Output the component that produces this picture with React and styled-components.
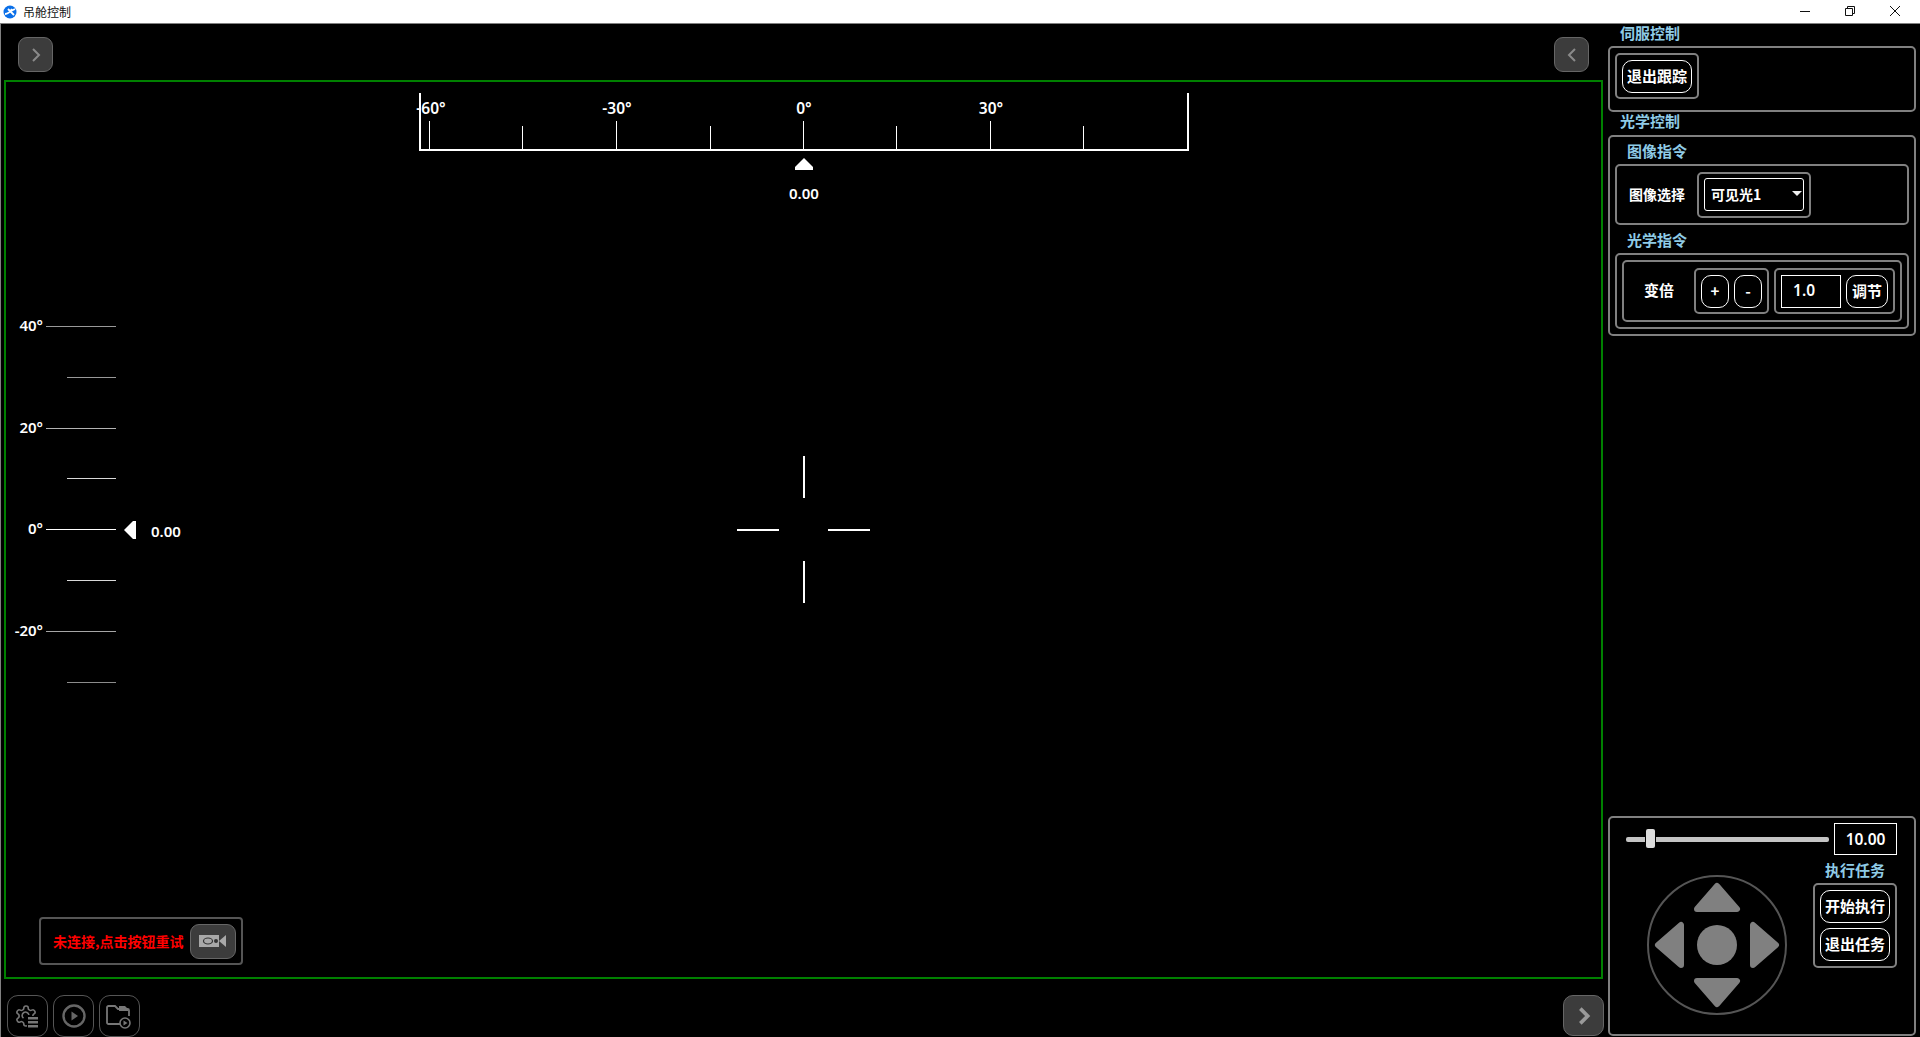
import React from "react";
import styled, { createGlobalStyle } from "styled-components";

const FONT = `"Noto Sans", "Noto Sans CJK SC", sans-serif`;
const LABEL_BLUE = "#8fcbe6";

const Global = createGlobalStyle`
  html, body { margin: 0; padding: 0; background: #000; overflow: hidden; }
  * { box-sizing: border-box; }
  #root { width: 1920px; height: 1037px; font-family: ${FONT}; }
`;

const Page = styled.div`
  width: 1920px;
  height: 1037px;
  display: flex;
  flex-direction: column;
  background: #000;
  color: #fff;
`;

const TitleBar = styled.div`
  height: 24px;
  flex: none;
  background: #fff;
  border-bottom: 1px solid #808080;
  display: flex;
  align-items: center;
  padding-left: 3px;
`;
const TitleText = styled.span`
  margin-left: 6px;
  font: 400 12px/1 "Noto Sans CJK SC", sans-serif;
  color: #111;
`;
const WinControls = styled.div`
  margin-left: auto;
  display: flex;
  align-items: center;
  height: 100%;
  padding: 0 19px 2px 0;
  gap: 33px;
`;

const Body = styled.div`
  flex: 1;
  display: flex;
  min-height: 0;
  border-left: 1px solid #808080;
`;

const LeftColumn = styled.div`
  width: 1607px;
  flex: none;
  display: flex;
  flex-direction: column;
`;
const TopBar = styled.div`
  height: 56px;
  flex: none;
  padding: 13px 15px 0 17px;
  display: flex;
  justify-content: space-between;
  align-items: flex-start;
  width: 1603px;
`;
const NavButton = styled.button`
  width: ${(p) => p.$size}px;
  height: ${(p) => p.$size}px;
  padding: 0;
  background: #3c3c3c;
  border: 1px solid #666;
  border-radius: ${(p) => (p.$size > 36 ? 10 : 9)}px;
  display: flex;
  align-items: center;
  justify-content: center;
`;
const VideoFrame = styled.div`
  position: relative;
  margin-left: 3px;
  width: 1599px;
  height: 899px;
  flex: none;
  border: 2px solid #008000;
`;
const BottomBar = styled.div`
  flex: 1;
  display: flex;
  align-items: flex-start;
  padding: 16px 0 0 6px;
  gap: 5px;
`;
const ToolButton = styled.button`
  width: 41px;
  height: 42px;
  padding: 0 ${(p) => p.$nudge || 0}px 0 0;
  background: #000;
  border: 1px solid #555;
  border-radius: 11px;
  display: flex;
  align-items: center;
  justify-content: center;
`;
const NextButton = styled(NavButton)`
  margin-left: auto;
  margin-right: 4px;
`;

/* HUD overlays on the video frame */
const HRuler = styled.div`
  position: absolute;
  left: 413px;
  top: 11px;
  width: 770px;
  height: 58px;
  border-left: 2px solid #fff;
  border-right: 2px solid #fff;
  border-bottom: 2px solid #fff;
`;
const HTick = styled.i`
  position: absolute;
  bottom: 0;
  width: 1px;
  background: #fff;
  height: ${(p) => (p.$long ? 28 : 23)}px;
`;
const HLabel = styled.span`
  position: absolute;
  top: 5px;
  transform: translateX(-50%);
  font: 600 15.500px/20px ${FONT};
  white-space: nowrap;
`;
const HPointer = styled.svg`
  position: absolute;
  left: 789px;
  top: 76px;
`;
const HudValue = styled.span`
  position: absolute;
  font: 600 15px/20px ${FONT};
`;
const VScale = styled.div`
  position: absolute;
  left: 0;
  top: 244px;
  width: 110px;
`;
const VRow = styled.div`
  height: 50.800px;
  position: relative;
`;
const VLine = styled.i`
  position: absolute;
  top: 0;
  right: 0;
  height: 1px;
  width: ${(p) => (p.$long ? 70 : 49)}px;
  background: rgba(255, 255, 255, ${(p) => p.$alpha});
`;
const VLabel = styled.span`
  position: absolute;
  right: 73px;
  top: -11px;
  font: 600 15px/20px ${FONT};
  white-space: nowrap;
`;
const VPointer = styled.svg`
  position: absolute;
  left: 118px;
  top: 439px;
`;
const CrossBar = styled.i`
  position: absolute;
  background: #fff;
  left: ${(p) => p.$x}px;
  top: ${(p) => p.$y}px;
  width: ${(p) => (p.$v ? 2 : 42)}px;
  height: ${(p) => (p.$v ? 42 : 2)}px;
`;
const ConnectBox = styled.div`
  position: absolute;
  left: 33px;
  top: 835px;
  width: 204px;
  height: 48px;
  border: 2px solid #555;
  border-radius: 4px;
  display: flex;
  align-items: center;
  padding: 0 5px 0 12px;
  justify-content: space-between;
`;
const ConnectText = styled.span`
  font: 700 14px/20px "Noto Sans CJK SC", sans-serif;
  color: #f00;
  white-space: nowrap;
`;
const CamButton = styled.button`
  width: 46px;
  height: 35px;
  padding: 0;
  background: #3c3c3c;
  border: 1px solid #666;
  border-radius: 9px;
  display: flex;
  align-items: center;
  justify-content: center;
`;

/* right panel */
const RightColumn = styled.div`
  width: 308px;
  flex: none;
  display: flex;
  flex-direction: column;
`;
const SectionLabel = styled.div`
  height: ${(p) => p.$h}px;
  padding-left: ${(p) => p.$left}px;
  font: 700 15px/${(p) => p.$lh}px "Noto Sans CJK SC", sans-serif;
  color: ${LABEL_BLUE};
  white-space: nowrap;
`;
const Panel = styled.div`
  border: 2px solid #808080;
  border-radius: 5px;
  padding: ${(p) => p.$pad};
  height: ${(p) => p.$h}px;
  flex: none;
  margin-bottom: ${(p) => p.$mb || 0}px;
`;
const InnerBox = styled.div`
  border: 2px solid #808080;
  border-radius: 5px;
  display: flex;
  align-items: center;
  height: ${(p) => p.$h}px;
  padding: ${(p) => p.$pad || 0};
  flex: ${(p) => (p.$grow ? 1 : "none")};
`;
const Group = styled.div`
  border: 2px solid #808080;
  border-radius: 5px;
  display: inline-flex;
  flex-direction: ${(p) => (p.$col ? "column" : "row")};
  align-items: center;
  height: ${(p) => p.$h || 46}px;
  padding: 5px;
  gap: 5px;
  flex: none;
  margin-left: ${(p) => p.$ml || 0}px;
`;
const CmdButton = styled.button`
  width: ${(p) => p.$w}px;
  height: 33px;
  padding: 0 0 2px;
  background: #000;
  border: 1px solid #fff;
  border-radius: 10px;
  color: #fff;
  font: 700 15px/1 "Noto Sans CJK SC", sans-serif;
  white-space: nowrap;
  display: flex;
  align-items: center;
  justify-content: center;
`;
const FieldLabel = styled.span`
  font: 700 ${(p) => p.$size}px/20px "Noto Sans CJK SC", sans-serif;
  color: ${(p) => p.$color || "#fff"};
  flex: none;
  margin: ${(p) => p.$m};
`;
const Select = styled.div`
  width: 100px;
  height: 33px;
  border: 1px solid #fff;
  border-radius: 3px;
  display: flex;
  align-items: center;
  padding: 0 0 2px 6px;
  position: relative;
  font: 700 14px/1 "Noto Sans CJK SC", sans-serif;
  color: #fff;
`;
const Caret = styled.i`
  position: absolute;
  right: 1px;
  top: 12px;
  width: 0;
  height: 0;
  border-left: 5px solid transparent;
  border-right: 5px solid transparent;
  border-top: 5px solid #eee;
`;
const NumberBox = styled.div`
  width: ${(p) => p.$w}px;
  height: ${(p) => p.$h}px;
  border: 1px solid #fff;
  display: flex;
  align-items: center;
  justify-content: ${(p) => p.$align || "center"};
  padding: ${(p) => p.$pt || 0}px 0 0 ${(p) => p.$pl || 0}px;
  flex: none;
  font: 600 15.500px/1 ${FONT};
  color: #fff;
`;
const Spacer = styled.div`
  flex: 1;
`;
const SliderRow = styled.div`
  display: flex;
  align-items: center;
  gap: 5px;
`;
const SliderTrack = styled.div`
  width: 203px;
  height: 5px;
  border-radius: 2px;
  background: #c4c4c4;
  position: relative;
`;
const SliderThumb = styled.i`
  position: absolute;
  left: 20px;
  top: -8px;
  width: 9px;
  height: 19px;
  border-radius: 2px;
  background: #dcdcdc;
  box-shadow: 0 0 0 1px #000;
`;
const ControlRow = styled.div`
  display: flex;
  justify-content: space-between;
  align-items: flex-start;
`;
const Joystick = styled.svg`
  margin: 20px 0 0 21px;
  flex: none;
`;
const TaskColumn = styled.div`
  display: flex;
  flex-direction: column;
  align-items: center;
  width: 84px;
  margin-right: 1px;
  padding-top: 5px;
`;
const ListPatch = styled.g`
  fill: #777;
`;

const Chevron = ({ dir = "right", w = 2, size = 18, color = "#8a8a8a" }) => (
  <svg width={size} height={size} viewBox="0 0 18 18" fill="none">
    <path d={dir === "right" ? "M6 3 L12 9 L6 15" : "M12 3 L6 9 L12 15"} stroke={color} strokeWidth={w} />
  </svg>
);

const Logo = () => (
  <svg width="14" height="14" viewBox="0 0 14 14">
    <circle cx="7" cy="7" r="6.500" fill="#0a6fe8" />
    <path d="M2 9 C5 9 7 7 9 4 M5 4 L11 10 M12 4 L8 6" stroke="#fff" strokeWidth="1.800" fill="none" />
  </svg>
);

const GearIcon = () => (
  <svg width="24" height="24" viewBox="0 0 24 24" fill="none">
    <path
      d="M12.220 2h-.44a2 2 0 0 0-2 2v.18a2 2 0 0 1-1 1.730l-.43.25a2 2 0 0 1-2 0l-.15-.08a2 2 0 0 0-2.730.73l-.22.38a2 2 0 0 0 .73 2.730l.15.1a2 2 0 0 1 1 1.720v.51a2 2 0 0 1-1 1.740l-.15.09a2 2 0 0 0-.73 2.730l.22.38a2 2 0 0 0 2.730.73l.15-.08a2 2 0 0 1 2 0l.43.25a2 2 0 0 1 1 1.730V20a2 2 0 0 0 2 2h.44a2 2 0 0 0 2-2v-.18a2 2 0 0 1 1-1.730l.43-.25a2 2 0 0 1 2 0l.15.08a2 2 0 0 0 2.730-.73l.22-.39a2 2 0 0 0-.73-2.730l-.15-.08a2 2 0 0 1-1-1.740v-.5a2 2 0 0 1 1-1.740l.15-.09a2 2 0 0 0 .73-2.730l-.22-.38a2 2 0 0 0-2.730-.73l-.15.08a2 2 0 0 1-2 0l-.43-.25a2 2 0 0 1-1-1.730V4a2 2 0 0 0-2-2z"
      stroke="#777"
      strokeWidth="1.600"
    />
    <path d="M9.500 14.200a3.400 3.400 0 1 1 5.400-3.200" stroke="#777" strokeWidth="1.600" />
    <rect x="13" y="12" width="11" height="12" fill="#000" />
    <ListPatch>
      <rect x="14" y="13" width="10" height="2.500" />
      <rect x="14" y="17" width="10" height="2.500" />
      <rect x="14" y="21" width="10" height="2.500" />
    </ListPatch>
  </svg>
);
const PlayIcon = () => (
  <svg width="26" height="26" viewBox="0 0 26 26" fill="none">
    <circle cx="13" cy="13" r="10.500" stroke="#666" strokeWidth="2.400" />
    <path d="M10.500 8.500 L17 13 L10.500 17.500Z" fill="#666" />
  </svg>
);
const FolderIcon = () => (
  <svg width="26" height="26" viewBox="0 0 26 26" fill="none">
    <path d="M16 21H3.500A1.500 1.500 0 0 1 2 19.500V4.500A1.500 1.500 0 0 1 3.500 3H10l3 3h9.500A1.500 1.500 0 0 1 24 7.500V13" stroke="#777" strokeWidth="1.800" />
    <path d="M14 3h6l3 3v2h-9z" fill="#777" />
    <circle cx="20" cy="20" r="5" fill="#000" stroke="#777" strokeWidth="1.600" />
    <path d="M18.500 17.500 L22.500 20 L18.500 22.500Z" fill="#777" />
  </svg>
);
const CameraIcon = () => (
  <svg width="28" height="14" viewBox="0 0 28 14">
    <rect x="0" y="1" width="20" height="12" fill="#a8a8a8" />
    <ellipse cx="9" cy="7" rx="4.500" ry="3" fill="none" stroke="#333" strokeWidth="1.200" />
    <circle cx="17" cy="7" r="2" fill="#333" />
    <path d="M20 7 L27 1 V13 L20 7Z" fill="#a8a8a8" />
  </svg>
);

const hTicks = [
  [8, true], [101, false], [194.500, true], [288.500, false], [382, true],
  [475, false], [568.500, true], [662, false],
];
const hLabels = [
  ["-60°", 10], ["-30°", 196], ["0°", 383], ["30°", 570],
];
const vRows = [
  ["40°", true, 0.6], [null, false, 0.6], ["20°", true, 0.7], [null, false, 0.85],
  ["0°", true, 1], [null, false, 0.85], ["-20°", true, 0.65], [null, false, 0.55],
];

export default function App() {
  return (
    <Page>
      <Global />
      <TitleBar>
        <Logo />
        <TitleText>吊舱控制</TitleText>
        <WinControls>
          <svg width="12" height="12" viewBox="0 0 12 12"><path d="M1 6.500h10" stroke="#111" /></svg>
          <svg width="12" height="12" viewBox="0 0 12 12" fill="none"><path d="M1.500 3.500h7v7h-7zM3.500 3.500v-2h7v7h-2" stroke="#111" /></svg>
          <svg width="12" height="12" viewBox="0 0 12 12" fill="none"><path d="M1 1l10 10M11 1L1 11" stroke="#111" /></svg>
        </WinControls>
      </TitleBar>
      <Body>
        <LeftColumn>
          <TopBar>
            <NavButton $size={35}><Chevron /></NavButton>
            <NavButton $size={35}><Chevron dir="left" /></NavButton>
          </TopBar>
          <VideoFrame>
            <HRuler>
              {hTicks.map(([x, long]) => (
                <HTick key={x} $long={long} style={{ left: x + "px" }} />
              ))}
              {hLabels.map(([t, x]) => (
                <HLabel key={t} style={{ left: x + "px" }}>{t}</HLabel>
              ))}
            </HRuler>
            <HPointer width="18" height="12" viewBox="0 0 18 12">
              <path d="M9 0 L18 9 V12 H0 V9Z" fill="#fff" />
            </HPointer>
            <HudValue style={{ left: "783px", top: "101px" }}>0.00</HudValue>
            <VScale>
              {vRows.map(([label, long, alpha], i) => (
                <VRow key={i}>
                  <VLine $long={long} $alpha={alpha} />
                  {label && <VLabel>{label}</VLabel>}
                </VRow>
              ))}
            </VScale>
            <VPointer width="12" height="18" viewBox="0 0 12 18">
              <path d="M0 9 L9 0 H12 V18 H9Z" fill="#fff" />
            </VPointer>
            <HudValue style={{ left: "145px", top: "439px" }}>0.00</HudValue>
            <CrossBar $v $x={797} $y={374} />
            <CrossBar $v $x={797} $y={479} />
            <CrossBar $x={731} $y={447} />
            <CrossBar $x={822} $y={447} />
            <ConnectBox>
              <ConnectText>未连接,点击按钮重试</ConnectText>
              <CamButton><CameraIcon /></CamButton>
            </ConnectBox>
          </VideoFrame>
          <BottomBar>
            <ToolButton $nudge={3}><GearIcon /></ToolButton>
            <ToolButton><PlayIcon /></ToolButton>
            <ToolButton $nudge={3}><FolderIcon /></ToolButton>
            <NextButton $size={41}><Chevron w={3} size={22} color="#9a9a9a" /></NextButton>
          </BottomBar>
        </LeftColumn>
        <RightColumn>
          <SectionLabel $h={22} $lh={18} $left={12}>伺服控制</SectionLabel>
          <Panel $h={66} $pad="5px">
            <Group><CmdButton $w={70}>退出跟踪</CmdButton></Group>
          </Panel>
          <SectionLabel $h={23} $lh={18} $left={12}>光学控制</SectionLabel>
          <Panel $h={201} $pad="0 5px">
            <SectionLabel $h={27} $lh={27} $left={12}>图像指令</SectionLabel>
            <InnerBox $h={61} $pad="0 5px 0 12px">
              <FieldLabel $size={14} $m="0 12px 2px 0">图像选择</FieldLabel>
              <Group>
                <Select>可见光1<Caret /></Select>
              </Group>
            </InnerBox>
            <SectionLabel $h={28} $lh={30} $left={12}>光学指令</SectionLabel>
            <InnerBox $h={76} $pad="5px">
              <InnerBox $grow $h={62} $pad="0 5px 0 20px">
                <FieldLabel $size={15} $m="0 20px 2px 0">变倍</FieldLabel>
                <Group>
                  <CmdButton $w={28}>+</CmdButton>
                  <CmdButton $w={28}>-</CmdButton>
                </Group>
                <Group $ml={5}>
                  <NumberBox $w={60} $h={33} $align="flex-start" $pl={11}>1.0</NumberBox>
                  <CmdButton $w={42}>调节</CmdButton>
                </Group>
              </InnerBox>
            </InnerBox>
          </Panel>
          <Spacer />
          <Panel $h={220} $mb={1} $pad="5px 16px 0 16px">
            <SliderRow>
              <SliderTrack><SliderThumb /></SliderTrack>
              <NumberBox $w={63} $h={32} $pt={1}>10.00</NumberBox>
            </SliderRow>
            <ControlRow>
              <Joystick width="140" height="140" viewBox="-70 -70 140 140">
                <circle r="69" fill="none" stroke="#555" strokeWidth="2" />
                <g fill="#808080" stroke="#808080" strokeWidth="6" strokeLinejoin="round">
                  <path d="M0 -59 L20 -36 H-20Z" />
                  <path d="M0 59 L20 36 H-20Z" />
                  <path d="M-59 0 L-36 -20 V20Z" />
                  <path d="M59 0 L36 -20 V20Z" />
                </g>
                <circle r="20" fill="#808080" />
              </Joystick>
              <TaskColumn>
                <FieldLabel $size={15} $m="0 0 3px 0" $color={LABEL_BLUE}>执行任务</FieldLabel>
                <Group $col $h={85}>
                  <CmdButton $w={70}>开始执行</CmdButton>
                  <CmdButton $w={70}>退出任务</CmdButton>
                </Group>
              </TaskColumn>
            </ControlRow>
          </Panel>
        </RightColumn>
      </Body>
    </Page>
  );
}
